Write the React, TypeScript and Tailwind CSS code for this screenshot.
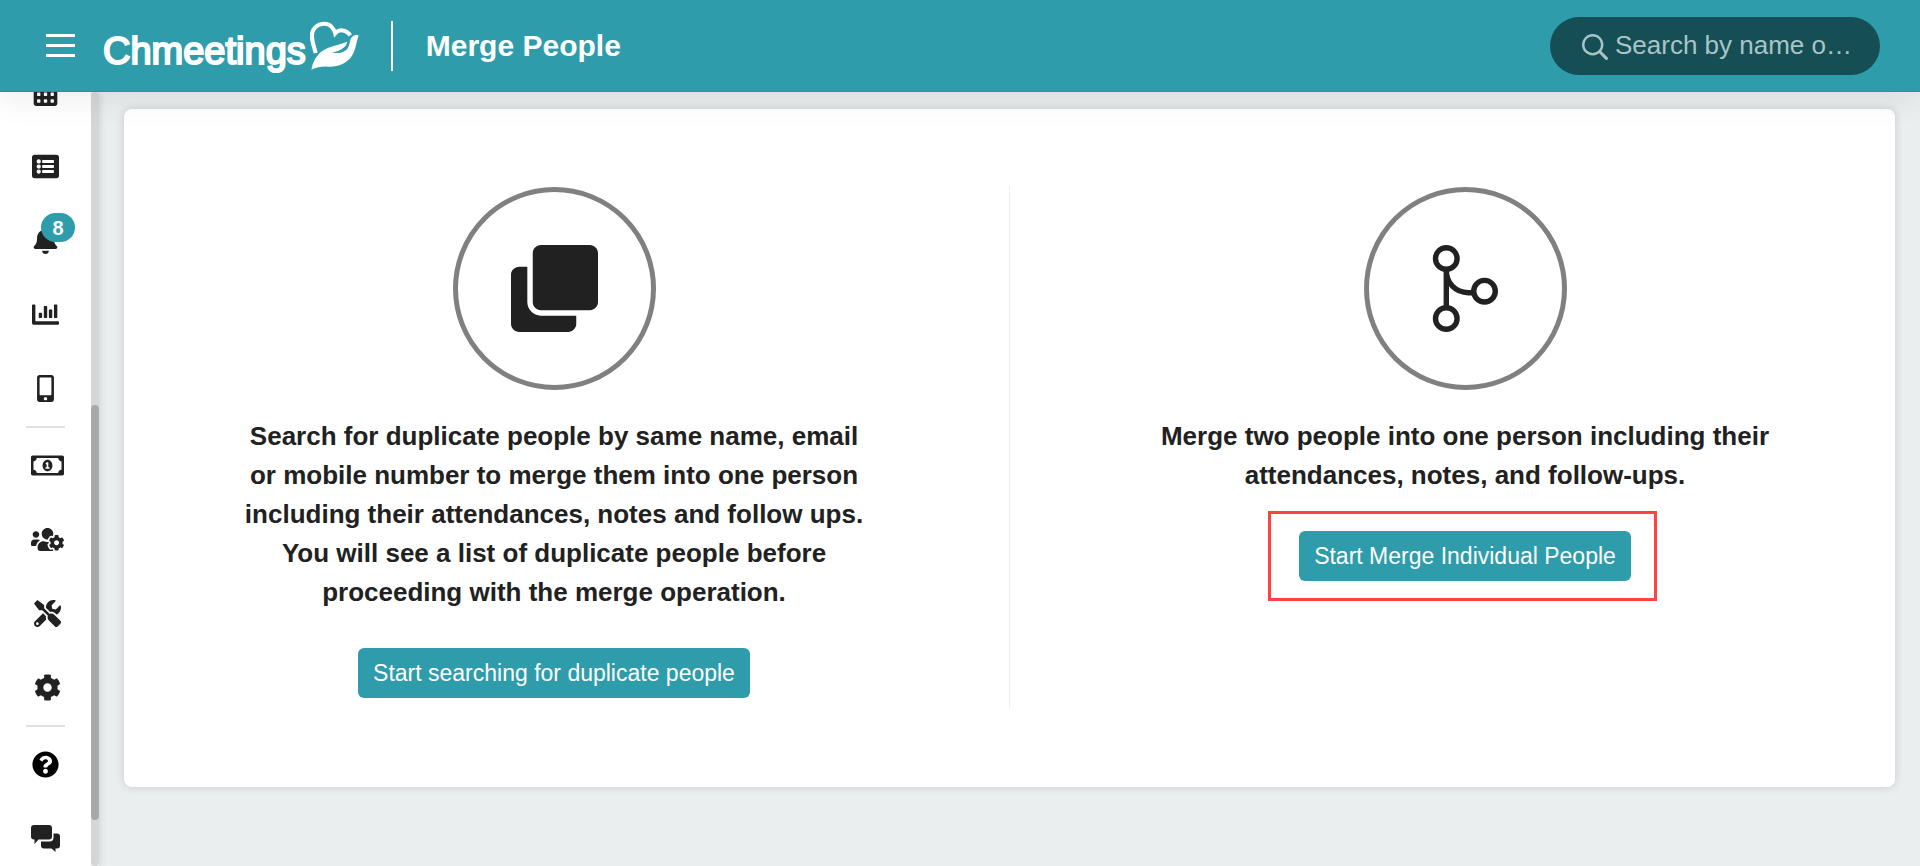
import type { ReactNode } from "react";
import {
  FaCalendarAlt,
  FaListAlt,
  FaBell,
  FaChartBar,
  FaMobileAlt,
  FaRegMoneyBillAlt,
  FaUsersCog,
  FaTools,
  FaCog,
  FaQuestionCircle,
  FaClone,
} from "react-icons/fa";

function HeartHand() {
  return (
    <svg viewBox="930 64 146 146" className="h-[49px] w-[49px]" aria-hidden="true">
      <path
        d="M947 160 C943 140 928 112 940 90 C952 70 980 67 993 80 C1000 87 1003 92 1005 101 C1016 88 1038 88 1050 107"
        fill="none"
        stroke="#fff"
        strokeWidth="12"
      />
      <path
        d="M934 209 C938 190 942 178 954 165 C963 154 975 148 985 144 C1002 137 1020 134 1041 126 C1038 145 1016 154 996 158 C1016 163 1038 156 1044 142 C1050 130 1048 118 1056 111 C1062 105 1070 105 1075 107 C1067 130 1066 154 1052 172 C1036 192 1012 202 982 200 C964 199 950 203 934 209 Z"
        fill="#fff"
      />
    </svg>
  );
}

function SearchIcon() {
  return (
    <svg viewBox="0 0 26 26" className="mt-0.5 h-[26px] w-[26px] shrink-0" fill="none" stroke="currentColor" aria-hidden="true">
      <circle cx="10.700" cy="10.700" r="9.500" strokeWidth="2.400" />
      <path d="M17.800 17.800l6.600 6.600" strokeWidth="3" strokeLinecap="round" />
    </svg>
  );
}

function ChatBubbles() {
  return (
    <svg viewBox="0 0 29 27" className="h-[27px] w-[29px]" fill="#212121" aria-hidden="true">
      <path d="M3 0h15q3 0 3 3v8.500q0 3-3 3H7.500L3.500 19v-4.500H3q-3 0-3-3V3q0-3 3-3z" />
      <path d="M22.500 8.500H26q3 0 3 3v9q0 3-3 3h-1.500V27l-4-3.500H13q-3 0-3-3V16.500h8.500q4 0 4-4z" />
    </svg>
  );
}

function MergeIcon() {
  return (
    <svg viewBox="0 0 87 87" className="h-[87px] w-[87px]" fill="none" stroke="#212121" strokeWidth="5.4" aria-hidden="true">
      <circle cx="24.300" cy="13.500" r="10.800" />
      <circle cx="24.300" cy="73.500" r="10.800" />
      <circle cx="62.500" cy="46.200" r="10.800" />
      <path d="M24.300 24v39M24.300 25c0 13 9 22.700 22 22.700h5" />
    </svg>
  );
}

function NavItem({ label, children, className = "" }: { label: string; children: ReactNode; className?: string }) {
  return (
    <a
      href="#"
      aria-label={label}
      className={`flex h-[74px] w-full shrink-0 items-center justify-center text-[27px] text-[#212121] ${className}`}
    >
      {children}
    </a>
  );
}

function Separator() {
  return <div className="mx-auto mt-px h-0.5 w-[39px] shrink-0 bg-[#e0e0e0]" />;
}

function Option({ icon, text, children }: { icon: ReactNode; text: string; children: ReactNode }) {
  return (
    <section className="flex flex-1 flex-col items-center pt-px pb-2.5">
      <div className="flex h-[203px] w-[203px] items-center justify-center rounded-full border-[5px] border-[#808080] text-[87px]">
        {icon}
      </div>
      <p className="mt-[27px] max-w-[636px] text-center text-[26px] leading-[39px] font-bold">{text}</p>
      {children}
    </section>
  );
}

function ActionButton({ children }: { children: ReactNode }) {
  return (
    <button type="button" className="h-[50px] rounded-md bg-[#2e9caa] px-[15px] text-[23px] text-white">
      {children}
    </button>
  );
}

export default function App() {
  return (
    <div className="flex h-screen flex-col overflow-hidden bg-[#eaeeef] font-['Liberation_Sans',Arial,sans-serif] text-[#212121]">
      <header className="relative z-10 flex h-[92px] shrink-0 items-center border-b border-[#28909d] bg-[#2e9caa] pr-10 pl-[46px] text-white shadow-[0_8px_32px_rgba(0,0,0,0.07)]">
        <button type="button" aria-label="Menu" className="flex w-[29px] flex-col gap-[7px]">
          <span className="h-[3px] bg-white" />
          <span className="h-[3px] bg-white" />
          <span className="h-[3px] bg-white" />
        </button>
        <a href="#" className="ml-7 flex items-center gap-1">
          <span className="pt-2.5 text-[38px] leading-[44px] [-webkit-text-stroke:2px_white]">Chmeetings</span>
          <HeartHand />
        </a>
        <div className="ml-8 h-[50px] w-0.5 bg-white" />
        <h1 className="ml-[33px] text-[30px] font-bold">Merge People</h1>
        <label className="ml-auto flex h-[58px] w-[330px] items-center gap-[7px] rounded-full bg-[#164e55] pr-6 pl-8 text-[#a9c4c7]">
          <SearchIcon />
          <input
            type="text"
            aria-label="Search"
            placeholder="Search by name o…"
            className="w-full min-w-0 bg-transparent text-[26px] outline-none placeholder:text-[#a9c4c7]"
          />
        </label>
      </header>

      <div className="flex min-h-0 flex-1">
        <aside className="flex shrink-0 shadow-[0_0_8px_rgba(0,0,0,0.15)]">
          <nav className="flex w-[91px] flex-col overflow-hidden bg-white">
            <NavItem label="Calendar" className="-mt-[37px]">
              <FaCalendarAlt />
            </NavItem>
            <NavItem label="Lists">
              <FaListAlt />
            </NavItem>
            <NavItem label="Notifications" className="relative">
              <FaBell />
              <span className="absolute top-2.5 left-[41px] flex h-[29px] w-[34px] items-center justify-center rounded-full bg-[#2e9caa] text-xl font-bold text-white">
                8
              </span>
            </NavItem>
            <NavItem label="Reports">
              <FaChartBar />
            </NavItem>
            <NavItem label="Mobile app">
              <FaMobileAlt />
            </NavItem>
            <Separator />
            <NavItem label="Contributions" className="pl-1">
              <FaRegMoneyBillAlt className="h-[27px] w-[33px]" />
            </NavItem>
            <NavItem label="Users" className="pl-1">
              <FaUsersCog className="h-[27px] w-[33px]" />
            </NavItem>
            <NavItem label="Tools" className="pl-1">
              <FaTools />
            </NavItem>
            <NavItem label="Settings" className="pl-1">
              <FaCog />
            </NavItem>
            <Separator />
            <NavItem label="Help">
              <FaQuestionCircle className="text-black" />
            </NavItem>
            <NavItem label="Chat">
              <ChatBubbles />
            </NavItem>
          </nav>
          <div className="flex w-2 flex-col rounded-full bg-[#d6d6d6]">
            <div className="flex-[313]" />
            <div className="flex-[415] rounded-full bg-[#a9a9a9]" />
            <div className="flex-[46]" />
          </div>
        </aside>

        <main className="min-w-0 flex-1 pt-[17px] pr-[25px] pl-[25px]">
          <div className="flex rounded-lg bg-white pt-[77px] pb-[79px] shadow-[0_0_10px_rgba(0,0,0,0.15)]">
            <Option
              icon={<FaClone />}
              text="Search for duplicate people by same name, email or mobile number to merge them into one person including their attendances, notes and follow ups. You will see a list of duplicate people before proceeding with the merge operation."
            >
              <div className="mt-9">
                <ActionButton>Start searching for duplicate people</ActionButton>
              </div>
            </Option>
            <div className="mx-[25px] w-px bg-[#f0f0f0]" />
            <Option
              icon={<MergeIcon />}
              text="Merge two people into one person including their attendances, notes, and follow-ups."
            >
              <div className="relative mt-9">
                <ActionButton>Start Merge Individual People</ActionButton>
                <span className="pointer-events-none absolute -top-5 -right-[26px] -bottom-5 -left-[31px] border-[3px] border-[#ff4343]" />
              </div>
            </Option>
          </div>
        </main>
      </div>
    </div>
  );
}
